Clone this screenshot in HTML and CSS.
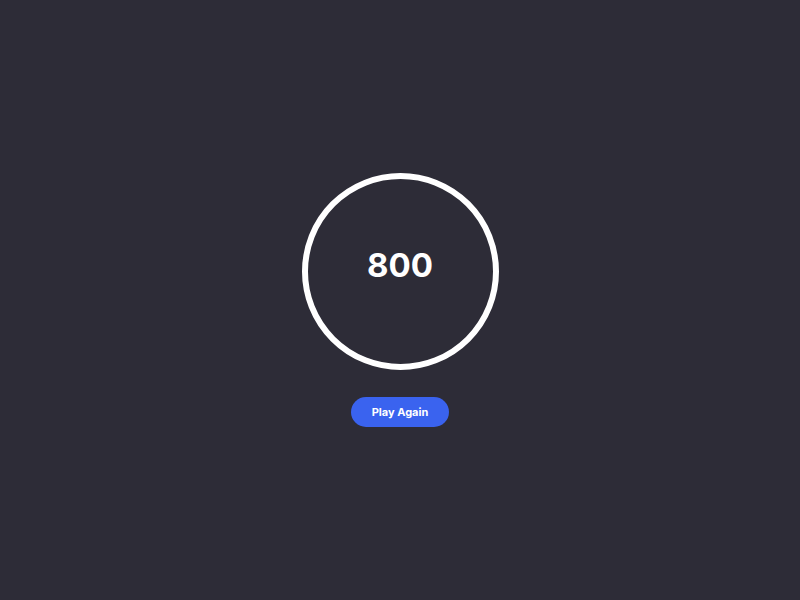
FILE: index.html
```html
<!DOCTYPE html>
<html>
<head>
<meta charset="utf-8">
<link rel="stylesheet" href="styles.css">
</head>
<body>
<main class="screen">
  <div class="ring"><span class="score">800</span></div>
  <button class="btn">Play Again</button>
</main>
</body>
</html>
```
FILE: styles.css
```css
html, body {
  margin: 0;
  padding: 0;
  height: 100%;
}
body {
  background: #2d2c37;
  font-family: Inter, "Noto Sans", sans-serif;
}
.screen {
  height: 100%;
  display: flex;
  flex-direction: column;
  align-items: center;
  justify-content: center;
  gap: 27px;
}
.ring {
  width: 185px;
  height: 185px;
  border: 6px solid #ffffff;
  border-radius: 50%;
  display: flex;
  align-items: center;
  justify-content: center;
}
.score {
  color: #ffffff;
  font-size: 33px;
  font-weight: 700;
  line-height: 1;
  margin-bottom: 12px;
}
.btn {
  width: 98px;
  height: 30px;
  border: none;
  border-radius: 15px;
  background: #3a63ef;
  color: #ffffff;
  font-family: Inter, "Noto Sans", sans-serif;
  font-size: 11px;
  font-weight: 700;
  padding: 0;
}
```
